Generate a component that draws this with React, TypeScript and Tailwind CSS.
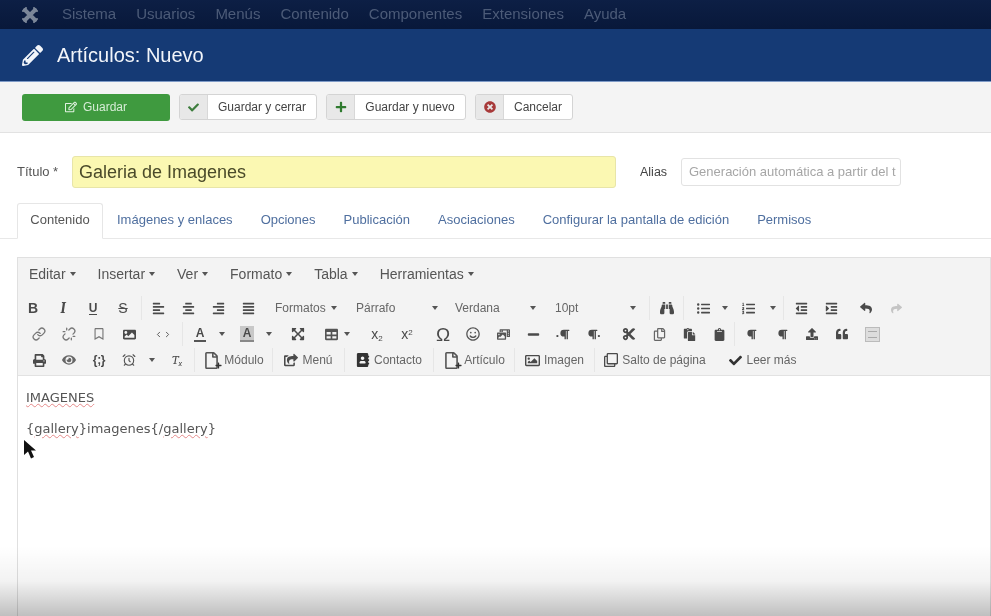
import React from "react";
import {
  FaAlignLeft, FaAlignCenter, FaAlignRight, FaAlignJustify,
  FaBinoculars, FaListUl, FaListOl, FaOutdent, FaIndent, FaReply, FaShare, FaRegBookmark,
  FaImage, FaExpandArrowsAlt, FaTable, FaRegSmile, FaPhotoVideo, FaMinus, FaParagraph, FaCut, FaRegCopy,
  FaPaste, FaClipboard, FaQuoteLeft, FaPrint, FaEye, FaRegFile, FaShareSquare, FaAddressBook,
  FaCheck, FaPlus, FaPencilAlt, FaRegEdit, FaTimesCircle, FaUpload, FaRegImage, FaRegClone,
} from "react-icons/fa";
import { Link, Unlink, AlarmClock, ChevronLeft, ChevronRight } from "lucide-react";

function Btn({ w = 30, children }: { w?: number; children?: React.ReactNode }) {
  return (
    <div className="flex h-[26px] shrink-0 items-center justify-center text-[#4a4a4a]" style={{ width: w }}>
      {children}
    </div>
  );
}
function Gap({ w }: { w: number }) {
  return <div className="h-px shrink-0" style={{ width: w }} />;
}
function Caret({ w = 12 }: { w?: number }) {
  return (
    <div className="flex h-[26px] shrink-0 items-center justify-center" style={{ width: w }}>
      <span className="h-0 w-0 border-x-[3.5px] border-t-[4px] border-x-transparent border-t-[#555]" />
    </div>
  );
}
function Sep() {
  return <div className="h-[24px] w-px shrink-0 bg-[#e6e6e6]" />;
}
function Sel({ w, label }: { w: number; label: string }) {
  return (
    <div className="flex h-[26px] shrink-0 items-center justify-between text-[12px] text-[#666]" style={{ width: w }}>
      <span>{label}</span>
      <span className="h-0 w-0 border-x-[3.5px] border-t-[4px] border-x-transparent border-t-[#555]" />
    </div>
  );
}
function TextBtn({ w, icon, label }: { w: number; icon: React.ReactNode; label: string }) {
  return (
    <div className="flex h-[26px] shrink-0 items-center justify-center gap-[4px] text-[12px] text-[#666]" style={{ width: w }}>
      <span className="flex shrink-0 items-center text-[#4a4a4a]">{icon}</span>
      <span>{label}</span>
    </div>
  );
}
function MenuItem({ label }: { label: string }) {
  return (
    <div className="flex items-center gap-[4px] text-[14px] text-[#555]">
      <span>{label}</span>
      <span className="h-0 w-0 border-x-[3.5px] border-t-[4px] border-x-transparent border-t-[#555]" />
    </div>
  );
}
function ActionBtn({ icon, label, w }: { icon: React.ReactNode; label: string; w: number }) {
  return (
    <div className="flex h-[26px] items-stretch overflow-hidden rounded-[3px] border border-[#d4d4d4] bg-white text-[12px] text-[#444]" style={{ width: w }}>
      <div className="flex w-[28px] shrink-0 items-center justify-center border-r border-[#d8d8d8] bg-[#e8e8e8]">{icon}</div>
      <div className="flex flex-1 items-center justify-center">{label}</div>
    </div>
  );
}
function FileAdd() {
  return (
    <span className="relative flex">
      <FaRegFile size={17} color="#555" />
      <FaPlus size={7} color="#333" className="absolute -right-[2px] bottom-0" />
    </span>
  );
}

export default function App() {
  return (
    <div className="relative h-[616px] w-[991px] overflow-hidden bg-white blur-[0.6px]" style={{ fontFamily: '"Liberation Sans", Arial, sans-serif' }}>
      {/* Nav */}
      <div className="flex h-[29px] items-center bg-gradient-to-b from-[#0d1f45] to-[#08183a] pl-[21px] text-[15px] text-[#4c5b78]">
        <svg width="18" height="18" viewBox="0 0 18 18" fill="none" stroke="#7b8698" strokeLinecap="round" className="mr-[23px]">
          <path d="M4 4l10 10M14 4L4 14" strokeWidth="4" />
          <path d="M2 5l3-3M13 2l3 3M2 13l3 3M13 16l3-3" strokeWidth="2" />
        </svg>
        <div className="flex gap-[20px]">
          <span>Sistema</span>
          <span>Usuarios</span>
          <span>Menús</span>
          <span>Contenido</span>
          <span>Componentes</span>
          <span>Extensiones</span>
          <span>Ayuda</span>
        </div>
      </div>
      {/* Title */}
      <div className="flex h-[53px] items-center gap-[14px] border-b border-[#7f9bc7] bg-[#153a75] pl-[22px] text-[20px] text-[#f2f5fa]">
        <FaPencilAlt size={21} color="#f2f5fa" />
        <span>Artículos: Nuevo</span>
      </div>
      {/* Toolbar */}
      <div className="flex h-[51px] items-center gap-[9px] border-b border-[#e2e2e2] bg-[#f4f4f4] pl-[22px]">
        <div className="flex h-[27px] w-[148px] items-center justify-center gap-[6px] rounded-[3px] bg-[#3f9a3f] text-[12px] text-[#d6ecd6]">
          <FaRegEdit size={12} color="#e2f2e2" />
          <span>Guardar</span>
        </div>
        <ActionBtn w={138} label="Guardar y cerrar" icon={<FaCheck size={11} color="#3d7d3d" />} />
        <ActionBtn w={140} label="Guardar y nuevo" icon={<FaPlus size={12} color="#2f7a2f" />} />
        <ActionBtn w={98} label="Cancelar" icon={<FaTimesCircle size={12} color="#a83a3a" />} />
      </div>
      {/* Title fields */}
      <div className="flex items-center pl-[17px] pt-[23px]">
        <span className="w-[55px] text-[13px] text-[#555]">Título *</span>
        <div className="flex h-[32px] w-[544px] items-center rounded-[3px] border border-[#e8e5a8] bg-[#fbf8b2] pl-[6px] text-[18px] text-[#4a4a2a]">Galeria de Imagenes</div>
        <span className="ml-[24px] w-[41px] text-[12.5px] text-[#444]">Alias</span>
        <div className="flex h-[28px] w-[220px] items-center overflow-hidden whitespace-nowrap rounded-[3px] border border-[#e2e2e2] bg-white pl-[7px] text-[13px] text-[#a6a6a6]">Generación automática a partir del t</div>
      </div>
      {/* Tabs */}
      <div className="mt-[15px] flex h-[36px] border-b border-[#e8e8e8] pl-[17px] text-[13px] text-[#4f6f9f]">
        <div className="-mb-px flex w-[86px] items-center justify-center rounded-t-[3px] border border-b-white border-[#e6e6e6] bg-white pb-[2px] text-[#555]">Contenido</div>
        <div className="ml-[14px] flex items-center gap-[28px] pb-[2px]">
          <span>Imágenes y enlaces</span>
          <span>Opciones</span>
          <span>Publicación</span>
          <span>Asociaciones</span>
          <span>Configurar la pantalla de edición</span>
          <span>Permisos</span>
        </div>
      </div>
      {/* Editor */}
      <div className="ml-[17px] mt-[18px] border border-[#e0e0e0]">
        <div className="border-b border-[#e2e2e2] bg-[#f3f3f3] pb-[2px]">
          <div className="flex h-[37px] items-center gap-[22px] pb-[6px] pl-[11px] pt-[1px]">
            <MenuItem label="Editar" />
            <MenuItem label="Insertar" />
            <MenuItem label="Ver" />
            <MenuItem label="Formato" />
            <MenuItem label="Tabla" />
            <MenuItem label="Herramientas" />
          </div>
          {/* Row 1 */}
          <div className="flex h-[26px] items-center">
            <Btn><span className="text-[14px] font-bold leading-none">B</span></Btn>
            <Btn><span className="font-serif text-[15px] font-bold italic leading-none">I</span></Btn>
            <Btn><span className="border-b border-[#4a4a4a] text-[12px] font-bold leading-[12px]">U</span></Btn>
            <Btn><span className="text-[14px] leading-none line-through">S</span></Btn>
            <Gap w={3} />
            <Sep />
            <Gap w={1} />
            <Btn><FaAlignLeft size={13} /></Btn>
            <Btn><FaAlignCenter size={13} /></Btn>
            <Btn><FaAlignRight size={13} /></Btn>
            <Btn><FaAlignJustify size={13} /></Btn>
            <Gap w={12} />
            <Sel w={62} label="Formatos" />
            <Gap w={19} />
            <Sel w={82} label="Párrafo" />
            <Gap w={17} />
            <Sel w={81} label="Verdana" />
            <Gap w={19} />
            <Sel w={81} label="10pt" />
            <Gap w={13} />
            <Sep />
            <Btn w={33}><FaBinoculars size={14} /></Btn>
            <Sep />
            <Gap w={6} />
            <Btn w={26}><FaListUl size={13} /></Btn>
            <Caret w={17} />
            <Btn w={30}><FaListOl size={13} /></Btn>
            <Caret w={20} />
            <Sep />
            <Gap w={2} />
            <Btn><FaOutdent size={13} /></Btn>
            <Btn><FaIndent size={13} /></Btn>
            <Gap w={5} />
            <Btn><FaReply size={12} /></Btn>
            <Btn><span className="text-[#c4c4c4]"><FaShare size={11} /></span></Btn>
          </div>
          {/* Row 2 */}
          <div className="flex h-[26px] items-center pl-[6px]">
            <Btn><Link size={14} color="#777" strokeWidth={2.2} /></Btn>
            <Btn><Unlink size={14} color="#777" strokeWidth={2.2} /></Btn>
            <Btn><FaRegBookmark size={12} color="#777" /></Btn>
            <Btn><FaImage size={13} /></Btn>
            <Btn w={38}>
              <span className="flex">
                <ChevronLeft size={9} color="#555" strokeWidth={2.5} />
                <ChevronRight size={9} color="#555" strokeWidth={2.5} />
              </span>
            </Btn>
            <Sep />
            <Gap w={4} />
            <Btn w={26}><span className="border-b-2 border-[#555] px-[2px] text-[12px] font-bold leading-[13px]">A</span></Btn>
            <Caret w={18} />
            <Gap w={3} />
            <Btn w={26}><span className="border-b-2 border-[#888] bg-[#c8c8c8] px-[3px] text-[12px] font-bold leading-[14px]">A</span></Btn>
            <Caret w={18} />
            <Gap w={8} />
            <Btn w={24}><FaExpandArrowsAlt size={14} /></Btn>
            <Gap w={8} />
            <Btn w={26}><FaTable size={13} color="#555" /></Btn>
            <Caret w={6} />
            <Gap w={12} />
            <Btn w={30}><span className="text-[14px]">x<sub className="text-[8px]">2</sub></span></Btn>
            <Btn w={30}><span className="text-[14px]">x<sup className="text-[8px]">2</sup></span></Btn>
            <Gap w={6} />
            <Btn w={30}><span className="text-[19px] leading-none">Ω</span></Btn>
            <Btn w={30}><FaRegSmile size={14} color="#555" /></Btn>
            <Btn w={30}><FaPhotoVideo size={13} color="#555" /></Btn>
            <Btn w={30}><FaMinus size={13} /></Btn>
            <Btn w={30}><span className="flex items-end"><span className="text-[8px] leading-[8px]">•</span><FaParagraph size={11} /></span></Btn>
            <Btn w={31}><span className="flex items-end"><FaParagraph size={11} /><span className="text-[8px] leading-[8px]">•</span></span></Btn>
            <Gap w={5} />
            <Btn w={30}><FaCut size={14} /></Btn>
            <Btn w={30}><FaRegCopy size={13} color="#666" /></Btn>
            <Btn w={30}><FaPaste size={13} /></Btn>
            <Btn w={30}><FaClipboard size={13} /></Btn>
            <Sep />
            <Btn w={32}><FaParagraph size={11} /></Btn>
            <Btn w={30}><FaParagraph size={11} /></Btn>
            <Btn w={30}><FaUpload size={12} /></Btn>
            <Btn w={30}><FaQuoteLeft size={12} /></Btn>
            <Btn w={30}>
              <span className="flex h-[15px] w-[15px] items-center justify-center border border-[#bbb] bg-[#ddd]">
                <span className="h-[7px] w-[9px] border-y border-[#aaa]" />
              </span>
            </Btn>
          </div>
          {/* Row 3 */}
          <div className="flex h-[26px] items-center pl-[6px]">
            <Btn><FaPrint size={13} /></Btn>
            <Btn><FaEye size={14} color="#666" /></Btn>
            <Btn><span className="text-[12px] font-bold tracking-tight">{"{;}"}</span></Btn>
            <Btn><AlarmClock size={14} color="#555" strokeWidth={2} /></Btn>
            <Caret w={16} />
            <Btn w={34}><span className="font-serif text-[13px] italic">T<sub className="text-[8px]">x</sub></span></Btn>
            <Sep />
            <TextBtn w={77} icon={<FileAdd />} label="Módulo" />
            <Sep />
            <TextBtn w={71} icon={<FaShareSquare size={14} />} label="Menú" />
            <Sep />
            <TextBtn w={88} icon={<FaAddressBook size={14} color="#333" />} label="Contacto" />
            <Sep />
            <TextBtn w={80} icon={<FileAdd />} label="Artículo" />
            <Sep />
            <TextBtn w={79} icon={<FaRegImage size={15} />} label="Imagen" />
            <Sep />
            <TextBtn w={120} icon={<FaRegClone size={14} />} label="Salto de página" />
            <Gap w={8} />
            <TextBtn w={80} icon={<FaCheck size={13} color="#333" />} label="Leer más" />
          </div>
        </div>
        {/* Body */}
        <div className="h-[300px] bg-white pl-[8px] pt-[14px] text-[13px] leading-[16px] text-[#555]" style={{ fontFamily: '"DejaVu Sans", Verdana, sans-serif' }}>
          <p className="underline decoration-[#e58a8a] decoration-wavy decoration-1">IMAGENES</p>
          <p className="mt-[15px]">
            {"{"}<span className="underline decoration-[#e58a8a] decoration-wavy decoration-1">gallery</span>{"}imagenes{/"}<span className="underline decoration-[#e58a8a] decoration-wavy decoration-1">gallery</span>{"}"}
          </p>
        </div>
      </div>
      {/* Mouse cursor */}
      <svg width="14" height="22" viewBox="0 0 14 22" className="absolute left-[23px] top-[440px]">
        <path d="M1 0l0 15 4-3.5 3 7 3-1.5-3-6.5 5 0z" fill="#111" />
      </svg>
      {/* Video fade at bottom */}
      <div className="pointer-events-none absolute inset-x-0 bottom-0 h-[70px] bg-gradient-to-b from-transparent via-black/5 via-50% to-black/25" />
    </div>
  );
}
